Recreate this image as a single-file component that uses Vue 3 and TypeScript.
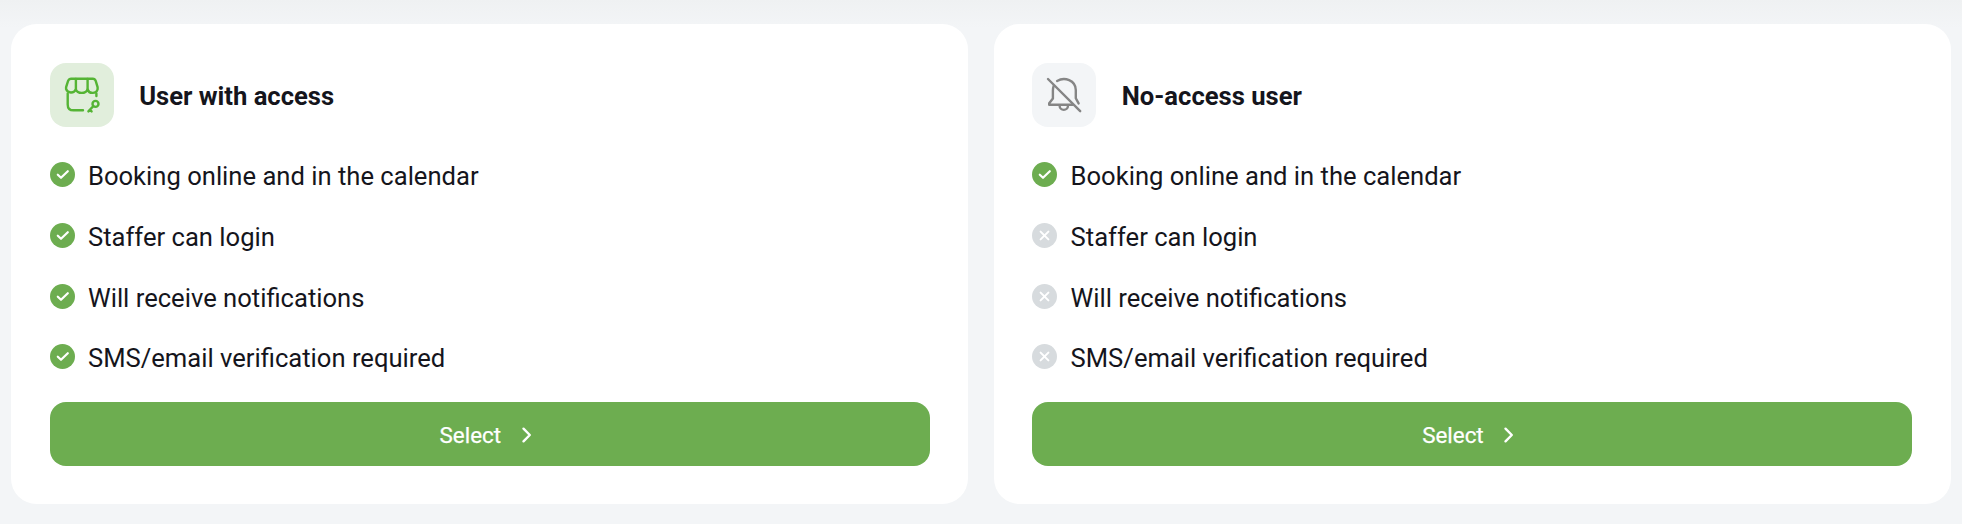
<script setup lang="ts">
interface Feature {
  label: string
  included: boolean
}

interface Option {
  id: 'access' | 'no-access'
  title: string
  features: Feature[]
}

const labels: string[] = [
  'Booking online and in the calendar',
  'Staffer can login',
  'Will receive notifications',
  'SMS/email verification required',
]

const options: Option[] = [
  {
    id: 'access',
    title: 'User with access',
    features: labels.map((label) => ({ label, included: true })),
  },
  {
    id: 'no-access',
    title: 'No-access user',
    features: labels.map((label, index) => ({ label, included: index === 0 })),
  },
]
</script>

<template>
  <main class="page">
    <section v-for="option in options" :key="option.id" class="card">
      <header class="head">
        <span class="tile" :class="option.id">
          <svg v-if="option.id === 'access'" class="glyph" viewBox="0 0 40 40">
            <path d="M9.2 3.7H30.8Q32.9 3.7 33.7 5.9L35.6 12.2V14.2A5.2 4.9 0 0 1 25.6 14.5A6.2 4.9 0 0 1 13.8 14.5A5.2 4.9 0 0 1 4.1 14.2V12.2L6.1 5.9Q7 3.7 9.2 3.7Z" />
            <path d="M13.9 4V14.5M25.6 4V14.5" />
            <path d="M5.7 18.5V29.4Q5.7 35.3 11.5 35.3H21M34.4 18.5V21" />
            <circle cx="33.5" cy="28.9" r="3" />
            <path d="M31.2 31.2L26.4 36.4M28 35L29.6 36.4" />
          </svg>
          <svg v-else class="glyph" viewBox="0 0 40 40">
            <path d="M4 4L36.2 36.2" />
            <path d="M13.1 6C20.5 1.6 31.6 5.2 31.8 15V23.2L34.6 28.4" />
            <path d="M9.7 10.8C9.1 12.4 8.9 13.8 8.9 15.5V23.5L5.2 28.2V29.8H28.8" />
            <path d="M15.6 30.4C15.6 36.3 24 36.3 24 30.4" />
          </svg>
        </span>
        <h2 class="title">{{ option.title }}</h2>
      </header>
      <ul class="features">
        <li v-for="feature in option.features" :key="feature.label" class="feature">
          <svg class="mark" :class="{ off: !feature.included }" viewBox="0 0 25 25">
            <circle cx="12.5" cy="12.5" r="12.5" />
            <path v-if="feature.included" d="M7.8 12.7L11 15.8L17.8 9.2" />
            <path v-else d="M8.6 8.6L16.4 16.4M16.4 8.6L8.6 16.4" />
          </svg>
          <span class="label">{{ feature.label }}</span>
        </li>
      </ul>
      <button class="select" type="button">
        <span class="caption">Select</span>
        <svg class="chevron" viewBox="0 0 26 26">
          <path d="M9.5 6.7L15.8 13L9.5 19.3" />
        </svg>
      </button>
    </section>
  </main>
</template>

<style>
body {
  margin: 0;
}
</style>

<style scoped>
.page {
  box-sizing: border-box;
  display: grid;
  grid-template-columns: 1fr 1fr;
  gap: 25.6px;
  height: 524px;
  padding: 24px 11.2px 20px;
  background: linear-gradient(#eff1f2, #f3f5f7 28px);
  color: #15151c;
  font-family: Roboto, sans-serif;
}

.card {
  box-sizing: border-box;
  display: flex;
  flex-direction: column;
  padding: 39px 38.4px 38px;
  border-radius: 25.6px;
  background: #fff;
}

.head {
  display: flex;
  align-items: center;
  gap: 25.6px;
}

.tile {
  display: grid;
  place-items: center;
  width: 64px;
  height: 64px;
  border-radius: 16px;
}

.access {
  background: #e1eedc;
  color: #55b435;
}

.no-access {
  background: #f3f5f7;
  color: #858585;
}

.glyph {
  width: 40px;
  height: 40px;
  fill: none;
  stroke: currentColor;
  stroke-width: 2.4;
  stroke-linecap: round;
  stroke-linejoin: round;
}

.title {
  margin: 2px 0 0;
  font-size: 25.6px;
  font-weight: 700;
  line-height: 32px;
}

.features {
  display: flex;
  flex-direction: column;
  gap: 20.8px;
  margin: 28px 0 0;
  padding: 0;
  list-style: none;
}

.feature {
  display: flex;
  align-items: center;
  gap: 13.4px;
  height: 40px;
  font-size: 25.6px;
  line-height: 40px;
}

.label {
  margin-top: 2px;
}

.mark {
  width: 25px;
  height: 25px;
  margin-bottom: 1px;
  fill: none;
  stroke: #fff;
  stroke-width: 2.2;
  stroke-linecap: round;
  stroke-linejoin: round;
}

.mark circle {
  fill: #6dad50;
  stroke: none;
}

.mark.off circle {
  fill: #d7dbde;
}

.mark.off path {
  stroke-width: 2;
}

.select {
  display: flex;
  align-items: center;
  justify-content: center;
  gap: 12.8px;
  height: 64px;
  margin-top: auto;
  padding: 0;
  border: 0;
  border-radius: 16px;
  background: #6dad50;
  color: #fff;
  font: 400 22.4px/32px Roboto, sans-serif;
}

.caption {
  margin-top: 1px;
  -webkit-text-stroke: 0.25px currentColor;
}

.chevron {
  width: 26px;
  height: 26px;
  margin-top: 1px;
  fill: none;
  stroke: currentColor;
  stroke-width: 2.4;
  stroke-linecap: round;
  stroke-linejoin: round;
}
</style>
